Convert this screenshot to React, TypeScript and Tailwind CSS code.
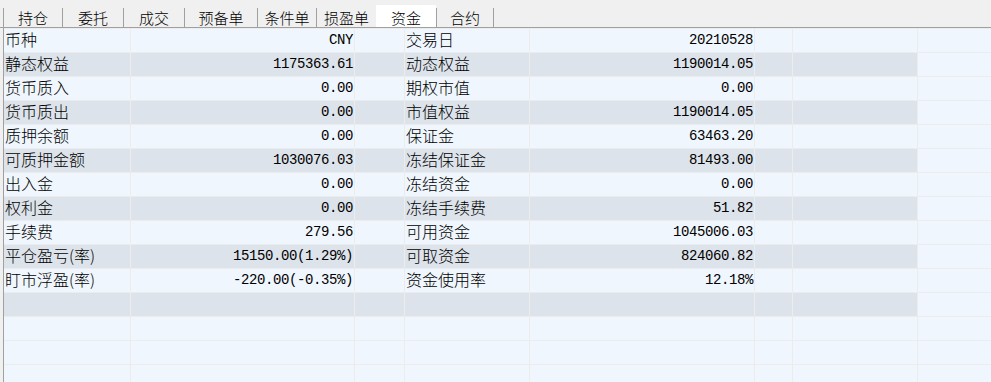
import React from "react";

const tabs = [
  { name: "持仓", w: 59 },
  { name: "委托", w: 61 },
  { name: "成交", w: 61 },
  { name: "预备单", w: 73 },
  { name: "条件单", w: 59 },
  { name: "损盈单", w: 60 },
  { name: "资金", w: 60, active: true },
  { name: "合约", w: 58 },
];

const rows: [string, string, string, string][] = [
  ["币种", "CNY", "交易日", "20210528"],
  ["静态权益", "1175363.61", "动态权益", "1190014.05"],
  ["货币质入", "0.00", "期权市值", "0.00"],
  ["货币质出", "0.00", "市值权益", "1190014.05"],
  ["质押余额", "0.00", "保证金", "63463.20"],
  ["可质押金额", "1030076.03", "冻结保证金", "81493.00"],
  ["出入金", "0.00", "冻结资金", "0.00"],
  ["权利金", "0.00", "冻结手续费", "51.82"],
  ["手续费", "279.56", "可用资金", "1045006.03"],
  ["平仓盈亏(率)", "15150.00(1.29%)", "可取资金", "824060.82"],
  ["盯市浮盈(率)", "-220.00(-0.35%)", "资金使用率", "12.18%"],
  ["", "", "", ""],
];

const cjk = { fontFamily: '"Noto Sans CJK SC", "Noto Sans", sans-serif' };
const mono = { fontFamily: '"Liberation Mono", "Noto Sans CJK SC", monospace' };

export default function App() {
  const emptyRows = 4;
  return (
    <div className="w-[991px] h-[382px] overflow-hidden bg-[#f0f0f0]">
      {/* tab bar */}
      <div className="h-[28px] border-b border-[#a0a0a0] pl-[3px] flex items-end">
        {tabs.map((t, i) => (
          <div
            key={t.name}
            style={{ width: t.w, ...cjk }}
            className={
              t.active
                ? "h-[22px] bg-white flex items-center justify-center text-[15px] font-light text-black leading-none pt-[2px]"
                : "h-[19px] border-l border-[#a0a0a0] flex items-center justify-center text-[15px] font-light text-black leading-none" +
                  (i === tabs.length - 1 ? " border-r" : "")
            }
          >
            {t.name}
          </div>
        ))}
      </div>
      {/* grid */}
      <div className="ml-[3px] border-l border-[#a0a0a0] grid grid-cols-[126px_224px_50px_125px_225px_38px_125px_1fr]">
        {rows.map((r, i) => {
          const bg = i % 2 === 1 ? "bg-[#dde3ea]" : "bg-[#eff6fd]";
          const cell = `h-[24px] border-t border-[#ececec] ${bg}`;
          return (
            <React.Fragment key={i}>
              <div className={`${cell} pl-[1px] pb-[4px] flex items-center text-[16px] font-light text-black leading-none`} style={cjk}>
                {r[0]}
              </div>
              <div className={`${cell} border-l pr-[1px] pb-[2px] flex items-center justify-end text-[14px] tracking-[-0.4px] text-black leading-none`} style={mono}>
                {r[1]}
              </div>
              <div className={`${cell} border-l`} />
              <div className={`${cell} border-l pl-[1px] pb-[4px] flex items-center text-[16px] font-light text-black leading-none`} style={cjk}>
                {r[2]}
              </div>
              <div className={`${cell} border-l pr-[1px] pb-[2px] flex items-center justify-end text-[14px] tracking-[-0.4px] text-black leading-none`} style={mono}>
                {r[3]}
              </div>
              <div className={`${cell} border-l`} />
              <div className={`${cell} border-l`} />
              <div className="h-[24px] border-t border-l border-[#ececec] bg-[#eff6fd]" />
            </React.Fragment>
          );
        })}
        {Array.from({ length: emptyRows }).map((_, i) => (
          <React.Fragment key={"e" + i}>
            <div className="h-[24px] border-t border-[#ececec] bg-[#eff6fd]" />
            <div className="h-[24px] border-t border-l border-[#ececec] bg-[#eff6fd]" />
            <div className="h-[24px] border-t border-l border-[#ececec] bg-[#eff6fd]" />
            <div className="h-[24px] border-t border-l border-[#ececec] bg-[#eff6fd]" />
            <div className="h-[24px] border-t border-l border-[#ececec] bg-[#eff6fd]" />
            <div className="h-[24px] border-t border-l border-[#ececec] bg-[#eff6fd]" />
            <div className="h-[24px] border-t border-l border-[#ececec] bg-[#eff6fd]" />
            <div className="h-[24px] border-t border-l border-[#ececec] bg-[#eff6fd]" />
          </React.Fragment>
        ))}
      </div>
    </div>
  );
}
